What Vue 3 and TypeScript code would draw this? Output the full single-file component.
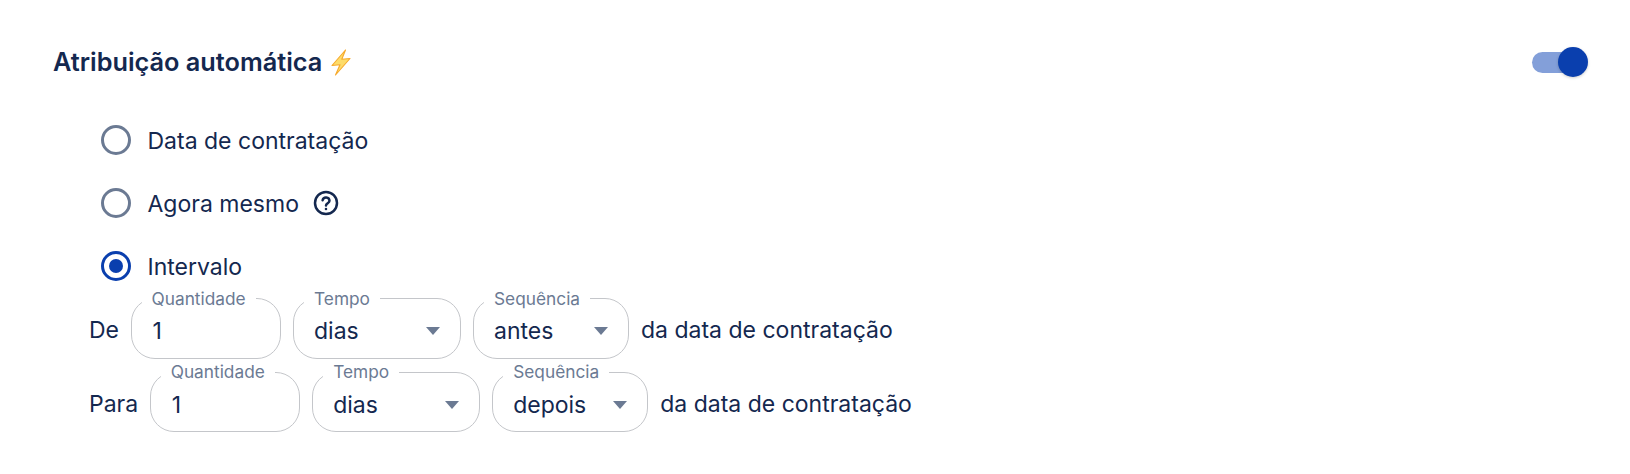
<script setup lang="ts">
interface Field {
  label: string
  value: string
  width: number
  select: boolean
}
interface Row {
  prefix: string
  fields: Field[]
}
const rows: Row[] = [
  {
    prefix: 'De',
    fields: [
      { label: 'Quantidade', value: '1', width: 150, select: false },
      { label: 'Tempo', value: 'dias', width: 167.5, select: true },
      { label: 'Sequência', value: 'antes', width: 155.5, select: true },
    ],
  },
  {
    prefix: 'Para',
    fields: [
      { label: 'Quantidade', value: '1', width: 150, select: false },
      { label: 'Tempo', value: 'dias', width: 167.5, select: true },
      { label: 'Sequência', value: 'depois', width: 155.5, select: true },
    ],
  },
]
</script>

<template>
  <div class="page">
    <header class="head">
      <h2 class="title">
        Atribuição automática
        <svg class="bolt" viewBox="0 0 20 27" width="20" height="27">
          <path d="M14.5 1 1 16.5l8-.8L4.5 26 19 9.5l-8.2.8z" fill="#fddc6a" stroke="#f6a92c" stroke-width="1.1" stroke-linejoin="round" />
        </svg>
      </h2>
      <span class="switch"><span class="track"></span><span class="thumb"></span></span>
    </header>
    <div class="options">
      <div class="opt"><span class="radio"></span><span class="opt-label">Data de contratação</span></div>
      <div class="opt">
        <span class="radio"></span><span class="opt-label">Agora mesmo</span>
        <svg class="help" viewBox="0 0 26 26" width="26" height="26" fill="none" stroke="#14284f" stroke-width="2.5">
          <circle cx="13" cy="13" r="11" />
          <path d="M9.6 10.2a3.5 3.5 0 0 1 6.9.6c0 2.4-3.5 2.6-3.5 4.8" stroke-linecap="round" />
          <circle cx="13" cy="19" r="0.7" fill="#14284f" stroke-width="1.2" />
        </svg>
      </div>
      <div class="opt"><span class="radio on"></span><span class="opt-label">Intervalo</span></div>
    </div>
    <div class="rows">
      <div v-for="row in rows" :key="row.prefix" class="row">
        <span class="prefix">{{ row.prefix }}</span>
        <fieldset v-for="f in row.fields" :key="f.label" class="field" :style="{ width: f.width + 'px' }">
          <legend class="legend">{{ f.label }}</legend>
          <span class="value" :class="{ plain: !f.select }">{{ f.value }}</span>
          <span v-if="f.select" class="caret"></span>
        </fieldset>
        <span class="suffix">da data de contratação</span>
      </div>
    </div>
  </div>
</template>

<style>
html, body { margin: 0; background: #fff; }
</style>

<style scoped>
.page {
  width: 1630px;
  height: 474px;
  box-sizing: border-box;
  padding: 40px 42px 0 53px;
  font-family: Inter, sans-serif;
  color: #14284f;
  font-size: 23px;
  overflow: hidden;
}
.head { display: flex; align-items: center; justify-content: space-between; height: 44px; }
.title { margin: 0; display: flex; align-items: center; gap: 9px; font-size: 25.3px; font-weight: 600; line-height: 44px; }
.switch { position: relative; display: block; width: 56px; height: 30px; }
.track { position: absolute; left: 0; top: 5px; width: 48px; height: 21px; border-radius: 11px; background: #839fd9; }
.thumb { position: absolute; right: 0; top: 0; width: 30px; height: 30px; border-radius: 50%; background: #0a3fae; box-shadow: 0 1px 3px rgba(0, 0, 0, 0.2); }
.options { margin-left: 48px; margin-top: 40.5px; display: flex; flex-direction: column; gap: 32px; }
.opt { display: flex; align-items: center; height: 31px; line-height: 31px; }
.opt-label { padding-top: 3px; }
.radio { width: 30px; height: 30px; box-sizing: border-box; border: 3px solid #6b7a93; border-radius: 50%; margin-right: 16.5px; position: relative; }
.radio.on { border-color: #0a3fae; }
.radio.on::after { content: ''; position: absolute; inset: 5px; border-radius: 50%; background: #0a3fae; }
.help { margin-left: 14px; }
.rows { margin-left: 36px; margin-top: 6px; display: flex; flex-direction: column; }
.row { display: flex; align-items: center; height: 73.5px; gap: 12.5px; }
.prefix { margin-right: -1px; }
.prefix, .suffix { margin-top: 12px; }
.field {
  margin: 0;
  box-sizing: border-box;
  height: 69px;
  padding: 0 20px;
  border: 1px solid #c4c6ca;
  border-radius: 24px;
  display: flex;
  align-items: center;
  justify-content: space-between;
}
.legend { padding: 0 10px; margin-left: -10px; font-size: 17.3px; line-height: 18px; color: #6b7a93; }
.value { display: block; padding-bottom: 3px; }
.value.plain { margin-left: 1px; }
.caret { width: 0; height: 0; margin-bottom: 3px; border-style: solid; border-width: 8px 7.5px 0; border-color: #6b7a93 transparent transparent; }
</style>
